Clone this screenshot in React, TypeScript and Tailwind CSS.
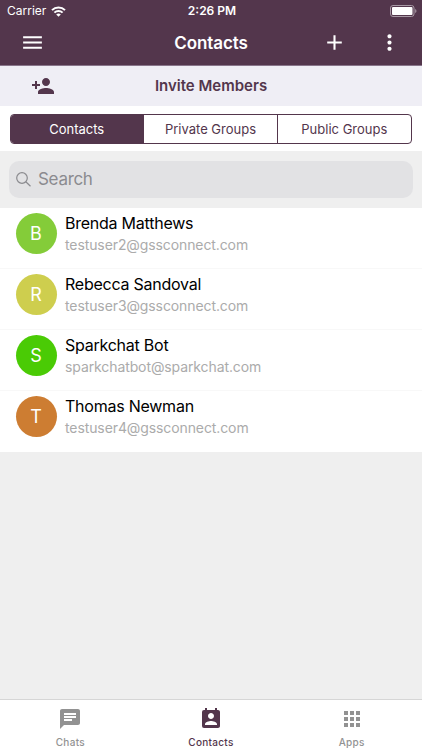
import { MdAdd, MdApps, MdChat, MdMenu, MdMoreVert, MdPermContactCalendar, MdPersonAdd } from 'react-icons/md'

interface Contact {
  name: string
  email: string
  color: string
}

const contacts: Contact[] = [
  { name: 'Brenda Matthews', email: 'testuser2@gssconnect.com', color: 'bg-[#84cc39]' },
  { name: 'Rebecca Sandoval', email: 'testuser3@gssconnect.com', color: 'bg-[#cece4e]' },
  { name: 'Sparkchat Bot', email: 'sparkchatbot@sparkchat.com', color: 'bg-[#4acb05]' },
  { name: 'Thomas Newman', email: 'testuser4@gssconnect.com', color: 'bg-[#cd7d32]' },
]

const tabs = [
  { label: 'Chats', Icon: MdChat, active: false },
  { label: 'Contacts', Icon: MdPermContactCalendar, active: true },
  { label: 'Apps', Icon: MdApps, active: false },
]

function StatusBar() {
  return (
    <div className="grid h-[21px] grid-cols-3 items-center pl-[7px] pr-[5px] pt-[1px] text-[12px]">
      <div className="flex items-center gap-[5px]">
        <span>Carrier</span>
        <svg width="15" height="11" viewBox="0 0 15 11" fill="none" stroke="currentColor" strokeWidth="2">
          <path d="M1 4.1a9.2 9.2 0 0 1 13 0" />
          <path d="M3.4 6.6a5.8 5.8 0 0 1 8.2 0" />
          <path d="M7.5 10.8 5.2 8.5a3.3 3.3 0 0 1 4.6 0Z" fill="currentColor" stroke="none" />
        </svg>
      </div>
      <span className="text-center font-semibold">2:26 PM</span>
      <svg className="justify-self-end" width="27" height="12" viewBox="0 0 27 12">
        <rect x="0.5" y="0.5" width="23.5" height="11" rx="2.5" fill="none" stroke="#a899a5" />
        <rect x="2" y="2" width="20.5" height="8" rx="1" fill="#fff" />
        <path d="M25.2 4v4c1.7-.7 1.7-3.3 0-4Z" fill="#a899a5" />
      </svg>
    </div>
  )
}

function Header() {
  return (
    <header className="h-[66px] border-b border-[#88758a] bg-[#53364c] text-white">
      <StatusBar />
      <div className="grid h-[43px] grid-cols-[1fr_auto_1fr] items-center pl-[20px] pr-[20px]">
        <MdMenu size={25} />
        <h1 className="pt-[2px] text-[17px] font-semibold tracking-[-0.1px]">Contacts</h1>
        <div className="flex justify-end gap-[30px]">
          <MdAdd size={25} />
          <MdMoreVert size={25} />
        </div>
      </div>
    </header>
  )
}

function ContactRow({ contact }: { contact: Contact }) {
  return (
    <li className="flex h-[61px] border-b border-[#f8f8f8] pl-[15.5px] pt-[5px] last:border-white">
      <div className={`flex size-[41px] items-center justify-center rounded-full text-[18px] text-white ${contact.color}`}>
        {contact.name[0]}
      </div>
      <div className="-mt-px ml-[8.5px]">
        <p className="text-[16px] leading-[22px] tracking-[-0.24px] text-black">{contact.name}</p>
        <p className="text-[14px] leading-[21px] tracking-[-0.1px] text-[#ababab]">{contact.email}</p>
      </div>
    </li>
  )
}

export default function App() {
  return (
    <div className="flex h-[750px] w-[422px] flex-col overflow-hidden bg-[#efefef] font-[Inter,'Liberation_Sans',sans-serif]">
      <Header />

      <button className="grid h-[40px] grid-cols-[1fr_auto_1fr] items-center bg-[#efeef5] pl-[31px] pr-[31px] text-[#53364c]">
        <MdPersonAdd size={24} />
        <span className="text-[15px] font-semibold">Invite Members</span>
      </button>

      <div className="h-[45px] bg-white px-[10px] pt-[8px]">
        <div className="grid h-[30px] grid-cols-3 divide-x divide-[#53364c] overflow-hidden rounded-[4px] border border-[#53364c] text-[13px] text-[#53364c]">
          <button className="bg-[#53364c] pr-[1px] pt-[1px] text-white">Contacts</button>
          <button className="pt-[1px]">Private Groups</button>
          <button className="pt-[1px]">Public Groups</button>
        </div>
      </div>

      <div className="h-[57px] px-[9px] pt-[10px]">
        <div className="flex h-[37px] items-center gap-[7px] rounded-[10px] bg-[#e2e2e4] pl-[7px] text-[#8b8b8f]">
          <svg width="15" height="15" viewBox="0 0 15 15" fill="none" stroke="currentColor" strokeWidth="1.2">
            <circle cx="6" cy="6" r="5.3" />
            <path d="m9.8 9.8 4.700 4.500" />
          </svg>
          <span className="pb-[2px] text-[17px] leading-[24px] tracking-[-0.3px]">Search</span>
        </div>
      </div>

      <ul className="bg-white">
        {contacts.map((contact) => (
          <ContactRow key={contact.email} contact={contact} />
        ))}
      </ul>

      <nav className="mt-auto grid h-[51px] grid-cols-3 border-t border-[#d6d6d6] bg-white">
        {tabs.map(({ label, Icon, active }) => (
          <button
            key={label}
            className={`flex flex-col items-center pt-[7px] text-[10px] ${active ? 'text-[#53364c]' : 'text-[#929292]'}`}
          >
            <Icon size={24} />
            <span className="mt-[4px] font-medium leading-[14px] tracking-[0.3px]">{label}</span>
          </button>
        ))}
      </nav>
    </div>
  )
}
